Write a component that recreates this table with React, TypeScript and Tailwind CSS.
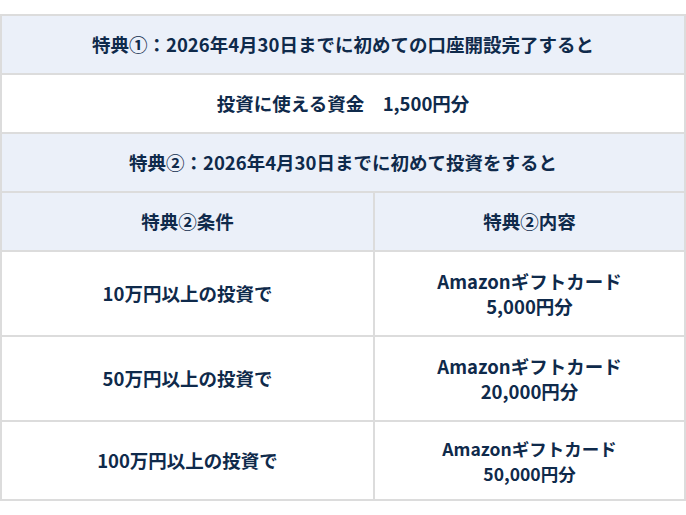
const font = "font-['Noto_Sans_CJK_JP','Noto_Sans',sans-serif]";

type Tier = {
  condition: string;
  amount: string;
  last?: boolean;
};

const tiers: Tier[] = [
  { condition: "10万円以上の投資で", amount: "5,000円分" },
  { condition: "50万円以上の投資で", amount: "20,000円分" },
  { condition: "100万円以上の投資で", amount: "50,000円分", last: true },
];

export default function App() {
  return (
    <div className={`${font} min-h-[515px] w-[686px] bg-white pt-[14px] font-bold text-[#0f2a4b]`}>
      <div className="border-2 border-[#dcdcdc]">
        <div className="flex h-[59px] items-center justify-center border-b-2 border-[#dcdcdc] bg-[#ebf0f9] text-[18.5px] leading-[25px]">
          特典①：2026年4月30日までに初めての口座開設完了すると
        </div>
        <div className="flex h-[59px] items-center justify-center border-b-2 border-[#dcdcdc] bg-white text-[18.5px] leading-[25px]">
          投資に使える資金　1,500円分
        </div>
        <div className="flex h-[59px] items-center justify-center border-b-2 border-[#dcdcdc] bg-[#ebf0f9] text-[18.5px] leading-[25px]">
          特典②：2026年4月30日までに初めて投資をすると
        </div>
        <div className="grid h-[59px] grid-cols-[371px_1fr] border-b-2 border-[#dcdcdc] bg-[#ebf0f9] text-[18.5px] leading-[25px]">
          <div className="flex items-center justify-center">特典②条件</div>
          <div className="flex items-center justify-center border-l-2 border-[#dcdcdc]">特典②内容</div>
        </div>
        {tiers.map((tier) => (
          <div
            key={tier.condition}
            className={
              tier.last
                ? "grid h-[77px] grid-cols-[371px_1fr] bg-white"
                : "grid h-[85px] grid-cols-[371px_1fr] border-b-2 border-[#dcdcdc] bg-white"
            }
          >
            <div className="flex items-center justify-center text-[18.5px] leading-[25px]">{tier.condition}</div>
            <div
              className={
                tier.last
                  ? "flex flex-col items-center justify-center border-l-2 border-[#dcdcdc] text-[17.5px] leading-[25px]"
                  : "flex flex-col items-center justify-center border-l-2 border-[#dcdcdc] text-[18.5px] leading-[25px]"
              }
            >
              <span>Amazonギフトカード</span>
              <span>{tier.amount}</span>
            </div>
          </div>
        ))}
      </div>
    </div>
  );
}
